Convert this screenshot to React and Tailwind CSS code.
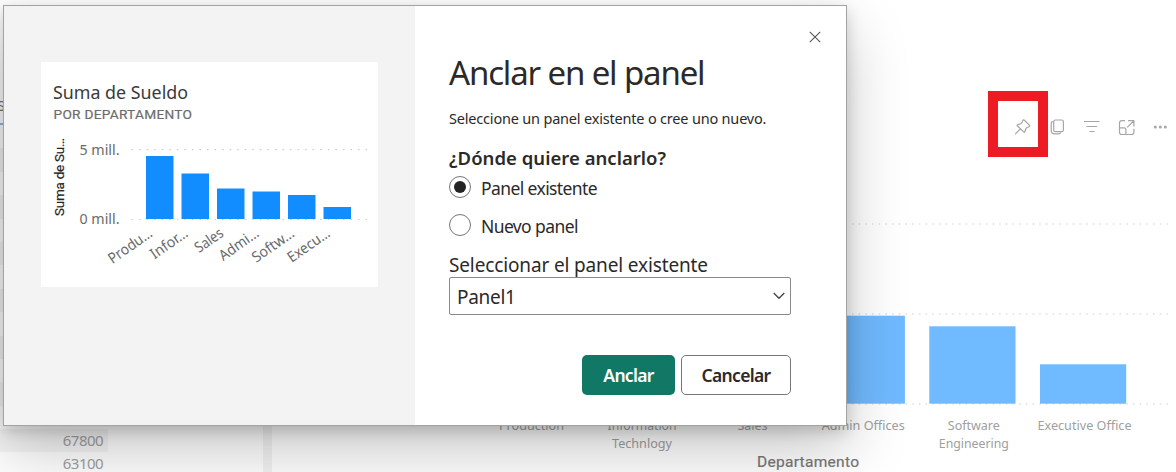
import React from "react";

const rows = Array.from({ length: 15 }, (_, i) => (i === 13 ? "67800" : i === 14 ? "63100" : ""));

const thumbBars = [
  { label: "Produ…", x: 146, y: 156, len: 50 },
  { label: "Infor…", x: 181.5, y: 173.5, len: 42 },
  { label: "Sales", x: 217, y: 188.5, len: 31 },
  { label: "Admi…", x: 252.5, y: 191.5, len: 45 },
  { label: "Softw…", x: 288, y: 195, len: 48 },
  { label: "Execu…", x: 323.5, y: 207, len: 48 },
];

const reportBars = [
  { x: 487, y: 160, lines: [["Production", 65]] },
  { x: 597.5, y: 220, lines: [["Information", 69], ["Technlogy", 60]] },
  { x: 708, y: 300, lines: [["Sales", 30]] },
  { x: 818.7, y: 315.7, lines: [["Admin Offices", 83]] },
  { x: 929.3, y: 326.3, lines: [["Software", 52], ["Engineering", 70]] },
  { x: 1040, y: 364.3, lines: [["Executive Office", 94]] },
];

function TableVisual() {
  return (
    <div className="w-[263px] shrink-0 bg-white">
      <div className="flex h-[125px] w-[108px] items-end border-b-2 border-[#84bdf5] pb-2 text-[15px] leading-5 text-[#777]">
        <span className="-ml-[3px]">Sueldo</span>
      </div>
      {rows.map((value, i) => (
        <div
          key={i}
          className={
            "flex h-[23.4px] w-[108px] items-center justify-end pr-[5px] text-[15px] leading-[22px] tracking-[-0.55px] text-[#a0a0a0] " +
            (i % 2 ? "bg-[#f5f5f5]" : "bg-white")
          }
        >
          <span className="-mt-[2px]">{value}</span>
        </div>
      ))}
    </div>
  );
}

function ReportChart() {
  return (
    <svg className="block h-[472px] w-[904px]" viewBox="272 0 904 472">
      {[224, 314, 404].map((y) => (
        <line key={y} x1="490.7" x2="1172" y1={y} y2={y} stroke="#dedede" strokeWidth="1.4" strokeDasharray="1.5 5.19" />
      ))}
      {reportBars.map((b) => (
        <g key={b.x}>
          <rect x={b.x} y={b.y} width="86.2" height={403.7 - b.y} fill="#70baff" />
          {b.lines.map(([text, len], i) => (
            <text key={text} x={b.x + 44.5} y={430 + i * 18} textAnchor="middle" textLength={len} lengthAdjust="spacingAndGlyphs" fontSize="13" fill="#a0a0a0">
              {text}
            </text>
          ))}
        </g>
      ))}
      <text x="757" y="467" textLength="102" fontFamily="Roboto, sans-serif" fontSize="15.5" fill="#777" stroke="#777" strokeWidth="0.2">
        Departamento
      </text>
    </svg>
  );
}

function Toolbar() {
  return (
    <div className="absolute top-[118px] left-[1013px] flex items-center gap-[16.5px] text-[#a6a6a6]">
      <svg width="18" height="18" viewBox="0 0 18 18" fill="none" stroke="currentColor" strokeWidth="1.2" strokeLinejoin="round" strokeLinecap="round">
        <path d="M11.1 2 16.6 7.400c.4.400.3.800-.2 1.100L13 10.300 11.700 14c-.2.400-.5.500-.8.200L4.300 7.700c-.3-.3-.2-.7.200-.8L8.300 5.500 10 2.300c.3-.5.700-.6 1.100-.3ZM7.400 10.800 2.500 15.800" />
      </svg>
      <svg width="18" height="18" viewBox="0 0 18 18" fill="none" stroke="currentColor" strokeWidth="1.2">
        <rect x="5.700" y="2" width="9.700" height="11.700" rx="1.800" />
        <path d="M4.900 3.400Q3.200 3.700 3.200 5.500V12q0 3.900 3.700 3.900h3.600q1.800 0 2.300-1.500" />
      </svg>
      <svg width="18" height="18" viewBox="0 0 18 18" stroke="currentColor" strokeWidth="1.2">
        <path d="M2 3.500h15.500M4.500 8.500h10.500M7.500 13.500h5" />
      </svg>
      <svg width="18" height="18" viewBox="0 0 18 18" fill="none" stroke="currentColor" strokeWidth="1.2" strokeLinejoin="round">
        <path d="M8 2.700H4.700Q2.500 2.700 2.500 4.900V14.300q0 2.200 2.200 2.200h10q2.200 0 2.200-2.200v-3.600M11 2.700H16.900V8.500M16.700 2.900 10.200 9.400M2.500 9.900H7q1.900 0 1.900 1.900v4.700" />
      </svg>
      <svg width="18" height="18" viewBox="0 0 18 18" fill="currentColor">
        <circle cx="4.300" cy="9" r="1.500" />
        <circle cx="9.300" cy="9" r="1.500" />
        <circle cx="14.300" cy="9" r="1.500" />
      </svg>
    </div>
  );
}

function Thumbnail() {
  return (
    <svg className="block h-[225px] w-[337px] bg-white" viewBox="41 62 337 225">
      <text x="53" y="98.500" textLength="135" lengthAdjust="spacingAndGlyphs" fontSize="18.500" fill="#3a3a3a">Suma de Sueldo</text>
      <text x="53.500" y="119" textLength="138.500" fontFamily="Roboto, sans-serif" fontSize="13.700" fill="#6c6c6c" stroke="#6c6c6c" strokeWidth="0.200">POR DEPARTAMENTO</text>
      <text transform="translate(64 216) rotate(-90)" textLength="78" fontFamily="Roboto, sans-serif" fontSize="13.500" fill="#252423" stroke="#252423" strokeWidth="0.200">Suma de Su…</text>
      <text x="79.500" y="155" textLength="40" lengthAdjust="spacingAndGlyphs" fontSize="14.500" fill="#6a6a6a">5 mill.</text>
      <text x="79.500" y="224" textLength="40" lengthAdjust="spacingAndGlyphs" fontSize="14.500" fill="#6a6a6a">0 mill.</text>
      {[149.700, 219.500].map((y) => (
        <line key={y} x1="131.500" x2="367" y1={y} y2={y} stroke="#ccc" strokeWidth="1.200" strokeDasharray="1.500 6.050" />
      ))}
      {thumbBars.map((b) => (
        <g key={b.label}>
          <rect x={b.x} y={b.y} width="27.500" height={219 - b.y} fill="#118dff" />
          <text transform={`translate(${b.x + 7.5} 235.500) rotate(-35)`} textAnchor="end" textLength={b.len} lengthAdjust="spacingAndGlyphs" fontSize="14.800" fill="#6a6a6a">
            {b.label}
          </text>
        </g>
      ))}
    </svg>
  );
}

function Radio({ label, checked }) {
  return (
    <label className="flex h-[38px] items-start">
      <span className="flex size-[22px] items-center justify-center rounded-full border border-[#757575]">
        {checked && <span className="size-3 rounded-full bg-[#252423]" />}
      </span>
      <span className="ml-[10px] text-[17.500px] leading-6 tracking-[-0.6px]">{label}</span>
    </label>
  );
}

function PinDialog() {
  return (
    <div className="absolute top-[5px] left-[3px] flex h-[421px] w-[844px] border border-[#a2a4a3] bg-white text-[#2b2a29] shadow-[0_25.6px_57.6px_0_rgba(0,0,0,0.22),0_4.8px_14.4px_0_rgba(0,0,0,0.18)]">
      <div className="w-[411px] shrink-0 bg-[#f3f3f3] pt-14 pl-[37px]">
        <Thumbnail />
      </div>
      <div className="flex flex-1 flex-col pr-[55px] pl-[34px]">
        <div className="-mr-[30px] flex h-[42px] items-end justify-end pb-[5px]">
          <svg width="12" height="12" viewBox="0 0 12 12" stroke="#555" strokeWidth="1.100">
            <path d="M.8.800 11.200 11.200M11.200.800.8 11.200" />
          </svg>
        </div>
        <h1 className="mt-[2px] text-[33px] leading-[46px] tracking-[-1.15px] whitespace-nowrap">Anclar en el panel</h1>
        <p className="mt-3 text-[14.500px] leading-5 tracking-[-0.19px] whitespace-nowrap">Seleccione un panel existente o cree uno nuevo.</p>
        <h2 className="mt-[17px] text-[18.500px] leading-[26px] font-semibold tracking-[0.03px] whitespace-nowrap">¿Dónde quiere anclarlo?</h2>
        <div className="mt-[5px]">
          <Radio label="Panel existente" checked />
          <Radio label="Nuevo panel" />
        </div>
        <div className="text-[19px] leading-[26px] tracking-[-0.14px] whitespace-nowrap">Seleccionar el panel existente</div>
        <div className="-mt-px flex h-[38px] w-[342px] shrink-0 items-center justify-between rounded-[2px] border border-[#8a8a8a] pr-[5px] pl-[7px] text-[19px] tracking-[-0.3px]">
          <span className="pt-0.5">Panel1</span>
          <svg width="12" height="8" viewBox="0 0 12 8" fill="none" stroke="#444" strokeWidth="1.300">
            <path d="M.7 1 6 6.300 11.300 1" />
          </svg>
        </div>
        <div className="mt-10 flex justify-end gap-1.5 text-[17.500px] font-semibold tracking-[-0.7px]">
          <button className="h-10 w-[93px] rounded-[5px] bg-[#117865] text-white">Anclar</button>
          <button className="h-10 w-[110px] rounded-[5px] border border-[#757575]">Cancelar</button>
        </div>
      </div>
    </div>
  );
}

export default function App() {
  return (
    <main className="relative flex h-[472px] w-[1176px] overflow-hidden bg-white font-['Noto_Sans',sans-serif]">
      <TableVisual />
      <div className="mt-2 w-[9px] shrink-0 bg-[#f3f3f3]" />
      <ReportChart />
      <Toolbar />
      <PinDialog />
      <div className="absolute top-[91px] left-[988px] h-[66px] w-[60px] border-10 border-[#ed1c24]" />
    </main>
  );
}
